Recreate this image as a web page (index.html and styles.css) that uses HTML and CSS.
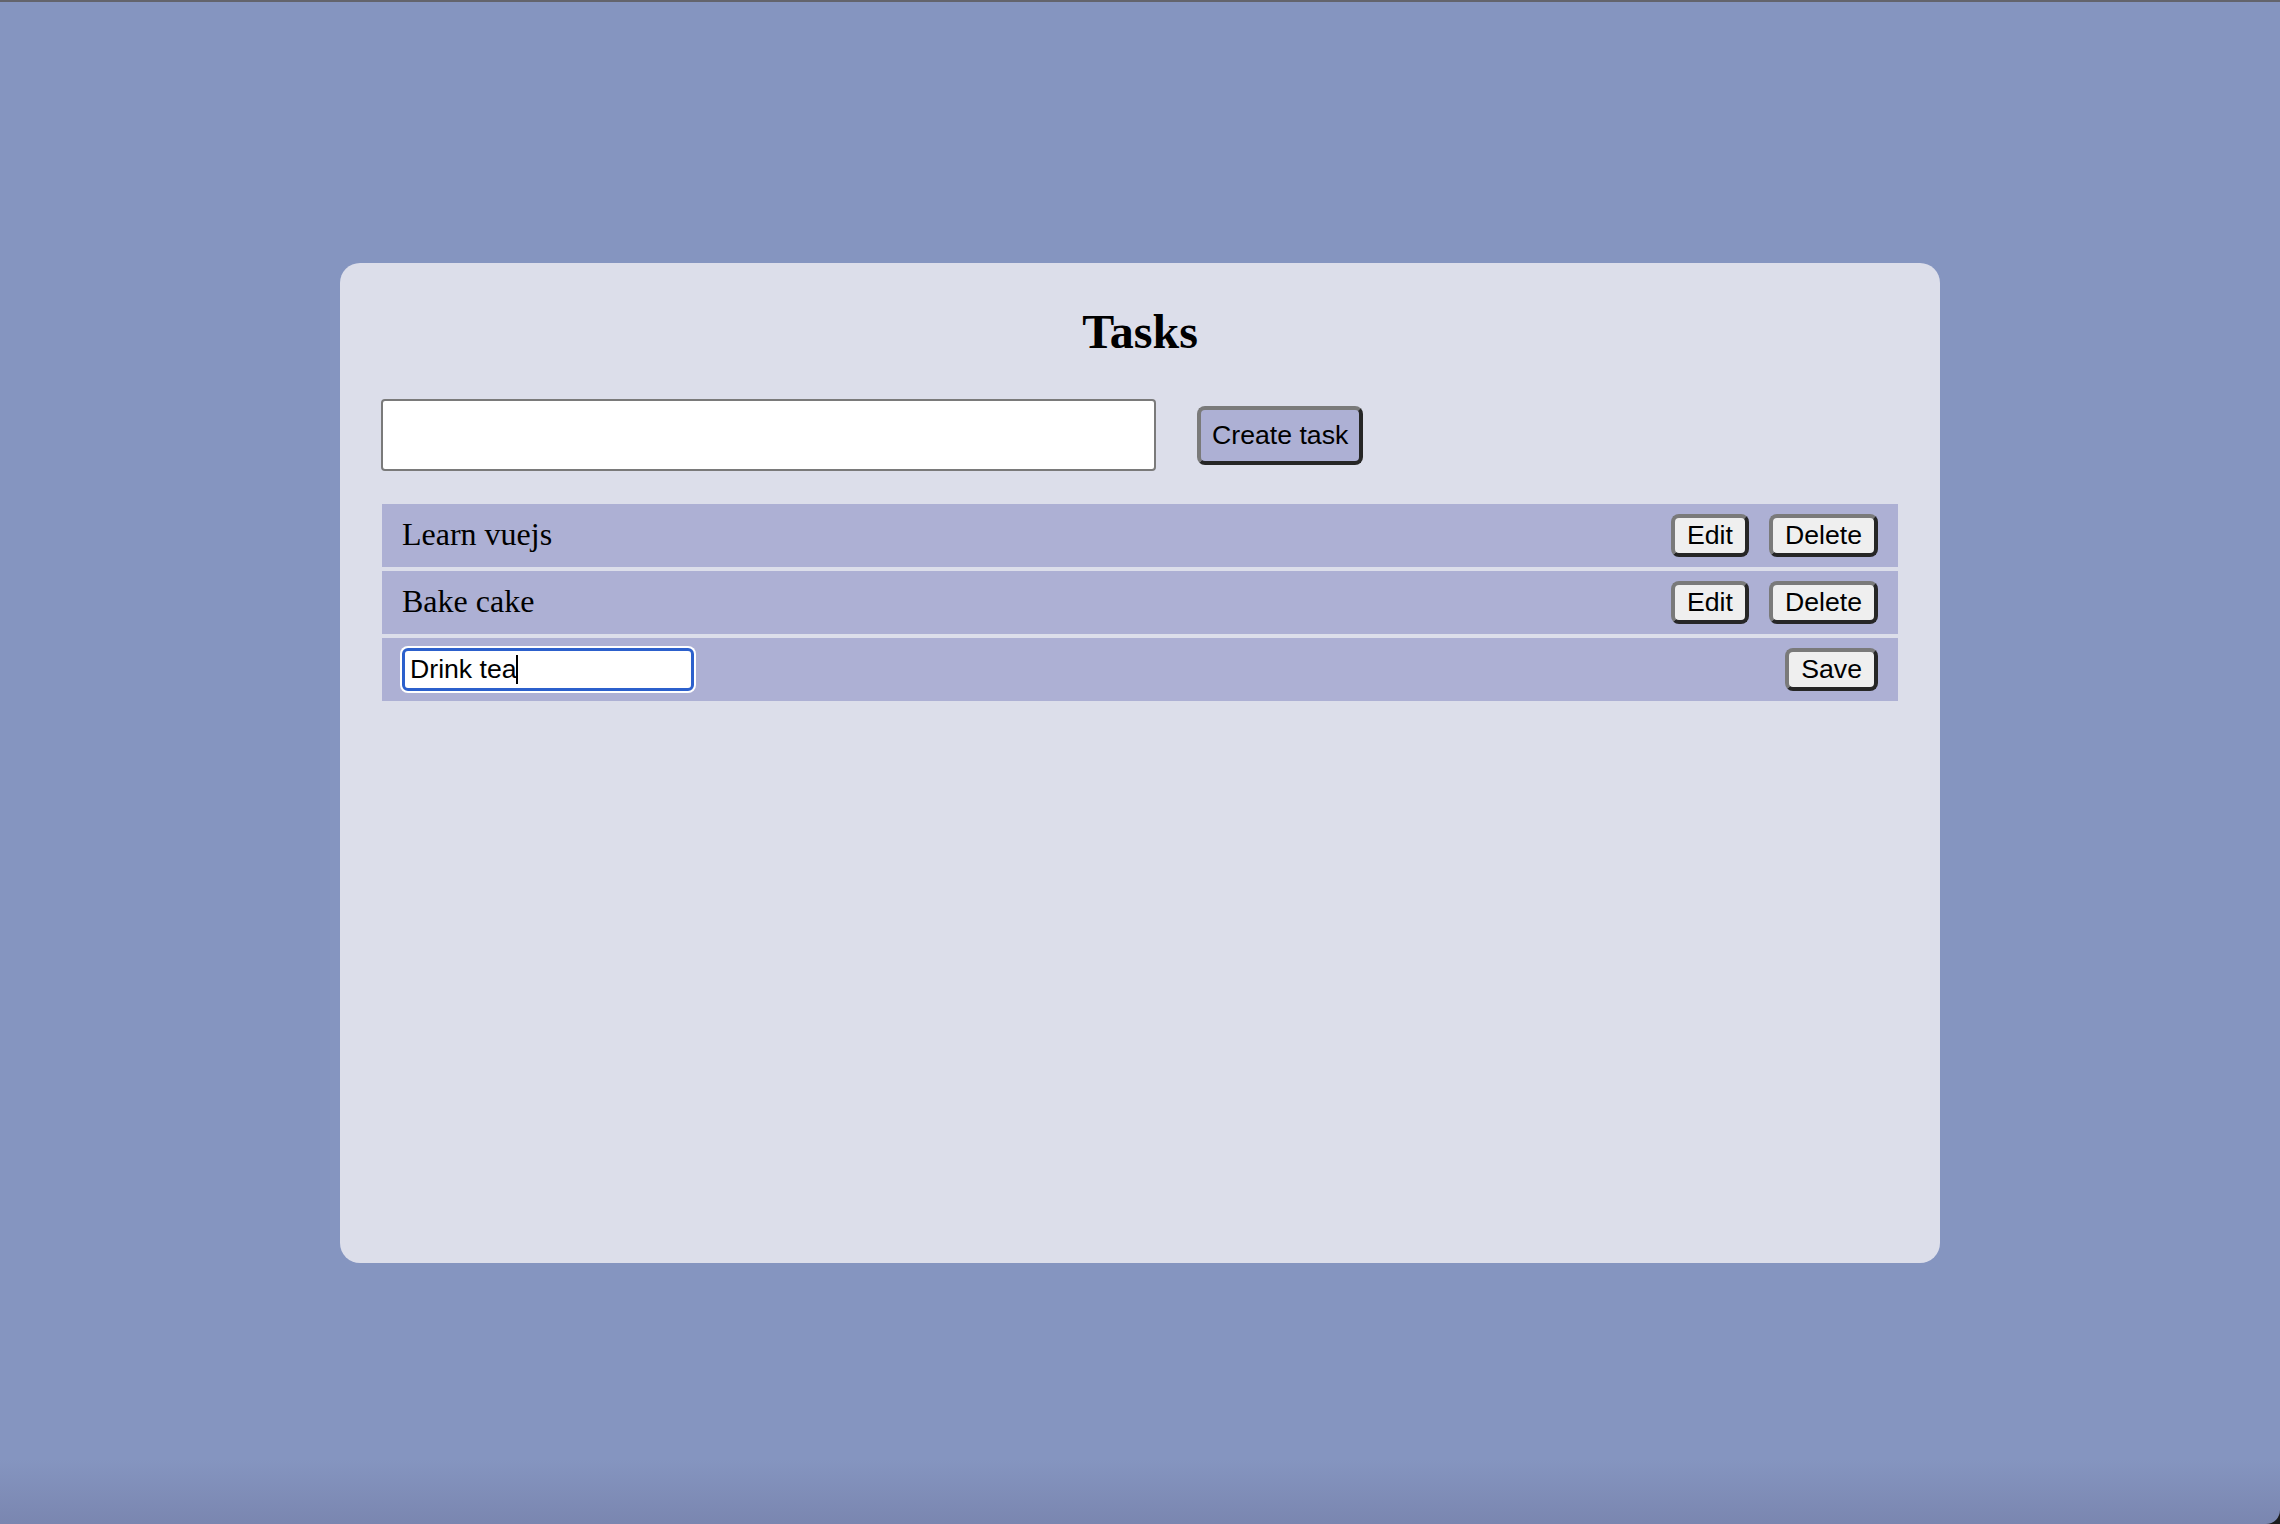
FILE: index.html
```html
<!DOCTYPE html>
<html lang="en">
<head>
<meta charset="utf-8">
<title>Tasks</title>
<link rel="stylesheet" href="styles.css">
</head>
<body>
<main class="card">
  <h2 class="title">Tasks</h2>
  <div class="create-row">
    <input class="create-input" type="text" value="">
    <button class="btn btn-create">Create task</button>
  </div>
  <ul class="task-list">
    <li class="task">
      <span class="task-name">Learn vuejs</span>
      <div class="actions">
        <button class="btn">Edit</button>
        <button class="btn">Delete</button>
      </div>
    </li>
    <li class="task">
      <span class="task-name">Bake cake</span>
      <div class="actions">
        <button class="btn">Edit</button>
        <button class="btn">Delete</button>
      </div>
    </li>
    <li class="task">
      <span class="edit-wrap">
        <input class="edit-input" type="text" value="Drink tea">
        <span class="caret"></span>
      </span>
      <div class="actions">
        <button class="btn">Save</button>
      </div>
    </li>
  </ul>
</main>
</body>
</html>
```

FILE: styles.css
```css
html {
  background: #1c1c1e;
  height: 100%;
}
body {
  margin: 0;
  height: 100%;
  box-sizing: border-box;
  border-top: 2px solid #63646c;
  background: linear-gradient(to bottom, #8595c0 0, #8595c0 calc(100% - 65px), #7a86b0 100%);
  border-bottom-right-radius: 14px;
  display: flex;
  align-items: center;
  justify-content: center;
  font-family: "Liberation Serif", "Times New Roman", serif;
}
.card {
  width: 1600px;
  height: 1000px;
  box-sizing: border-box;
  background: #dcdeea;
  border-radius: 20px;
  padding: 0 42px;
}
.title {
  margin: 41px 0 0;
  font-size: 48px;
  line-height: 55px;
  font-weight: bold;
  text-align: center;
}
.create-row {
  display: flex;
  align-items: center;
  gap: 41px;
  margin-top: 40px;
}
.create-input {
  width: 775px;
  height: 72px;
  box-sizing: border-box;
  margin: 0 0 0 -1px;
  border: 2px solid #7a7a7a;
  border-radius: 4px;
  background: #fff;
  padding: 0 8px;
  font-family: "Liberation Sans", Arial, sans-serif;
  font-size: 26.67px;
}
.btn {
  font-family: "Liberation Sans", Arial, sans-serif;
  font-size: 26.67px;
  line-height: normal;
  color: #000;
  background: #efefef;
  border: 4px solid;
  border-color: #7a7a7a #262626 #262626 #7a7a7a;
  border-radius: 8px;
  padding: 2px 12px;
  margin: 0;
}
.btn-create {
  background: #adb0d4;
  padding: 10px 11px;
}
.task-list {
  list-style: none;
  margin: 33px 0 0;
  padding: 0;
}
.task {
  display: flex;
  align-items: center;
  justify-content: space-between;
  background: #adb0d4;
  padding: 10px 20px;
  margin-bottom: 4px;
}
.task-name {
  font-size: 32px;
  line-height: 36px;
  position: relative;
  top: -2px;
}
.actions {
  display: flex;
  gap: 20px;
}
.edit-wrap {
  position: relative;
  display: flex;
}
.edit-input {
  width: 292px;
  height: 43px;
  box-sizing: border-box;
  margin: 0;
  border: 3px solid #2c60cc;
  border-radius: 6px;
  box-shadow: 0 0 0 2px #ffffff;
  outline: none;
  background: #fff;
  padding: 0 5px;
  font-family: "Liberation Sans", Arial, sans-serif;
  font-size: 26.67px;
  color: #000;
}
.caret {
  position: absolute;
  left: 114px;
  top: 7px;
  width: 2px;
  height: 29px;
  background: #000;
}
```
